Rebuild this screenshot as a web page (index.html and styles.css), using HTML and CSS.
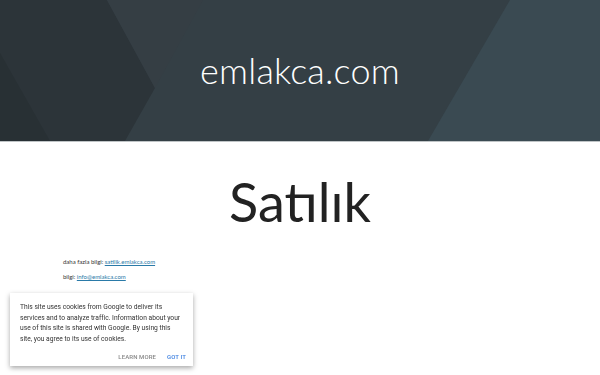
FILE: index.html
```html
<!DOCTYPE html>
<html lang="tr">
<head>
  <meta charset="UTF-8">
  <meta name="viewport" content="width=device-width, initial-scale=1.0">
  <title>emlakca.com: Satılık</title>
  <link rel="stylesheet" href="styles.css">
</head>
<body>
  <header class="header">
    <svg class="header-bg" viewBox="0 0 600 141" preserveAspectRatio="none" aria-hidden="true">
      <rect width="600" height="141" fill="#343f45"/>
      <polygon points="0,0 107,0 155,88 125,141 0,141" fill="#2c3439"/>
      <polygon points="0,53 50,141 0,141" fill="#283034"/>
      <polygon points="107,0 203,0 155,88" fill="#353e44"/>
      <polygon points="510,0 600,0 600,141 428,141" fill="#3a4a52"/>
    </svg>
    <h1 class="site-title">emlakca.com</h1>
  </header>

  <main class="content">
    <h2 class="page-title">Satılık</h2>
    <p class="info">daha fazla bilgi: <a href="#">satilik.emlakca.com</a></p>
    <p class="info">bilgi: <a href="#">info@emlakca.com</a></p>
  </main>

  <div class="cookie">
    <p class="cookie-text">This site uses cookies from Google to deliver its services and to analyze traffic. Information about your use of this site is shared with Google. By using this site, you agree to its use of cookies.</p>
    <div class="cookie-actions">
      <a href="#" class="cookie-more">LEARN MORE</a>
      <a href="#" class="cookie-ok">GOT IT</a>
    </div>
  </div>
</body>
</html>
```

FILE: styles.css
```css
body {
  margin: 0;
  font-family: Lato, 'Open Sans', sans-serif;
  background: #fff;
  color: #222;
}
.header {
  position: relative;
  height: 141px;
  display: flex;
  align-items: center;
  justify-content: center;
  border-bottom: 1px solid #bfc4c6;
  overflow: hidden;
}
.header-bg {
  position: absolute;
  top: 0;
  left: 0;
  width: 100%;
  height: 100%;
}
.site-title {
  position: relative;
  margin: 0 0 2px;
  font-weight: 300;
  font-size: 36px;
  color: #fff;
  letter-spacing: 0.2px;
}
.content {
  padding: 0 63px;
}
.page-title {
  margin: 27px 0 24px;
  text-align: center;
  font-weight: 400;
  font-size: 54px;
  color: #222;
}
.info {
  margin: 0 0 8px;
  font-size: 6px;
  line-height: 7px;
  color: #333;
}
.info a {
  color: #2a7aa8;
}
.cookie {
  position: fixed;
  left: 10px;
  bottom: 9px;
  width: 161px;
  padding: 9px 12px 6px 10px;
  background: #fff;
  box-shadow: 0 2px 5px rgba(0, 0, 0, 0.35);
  font-family: Roboto, sans-serif;
}
.cookie-text {
  margin: 0;
  font-size: 6.7px;
  line-height: 10.5px;
  color: #333;
}
.cookie-actions {
  display: flex;
  justify-content: flex-end;
  gap: 11px;
  margin-top: 9px;
  margin-right: -5px;
}
.cookie-actions a {
  font-size: 6px;
  font-weight: 500;
  text-decoration: none;
  letter-spacing: 0.1px;
}
.cookie-more {
  color: #888;
}
.cookie-ok {
  color: #3b7fe0;
  font-weight: 700;
}
```
